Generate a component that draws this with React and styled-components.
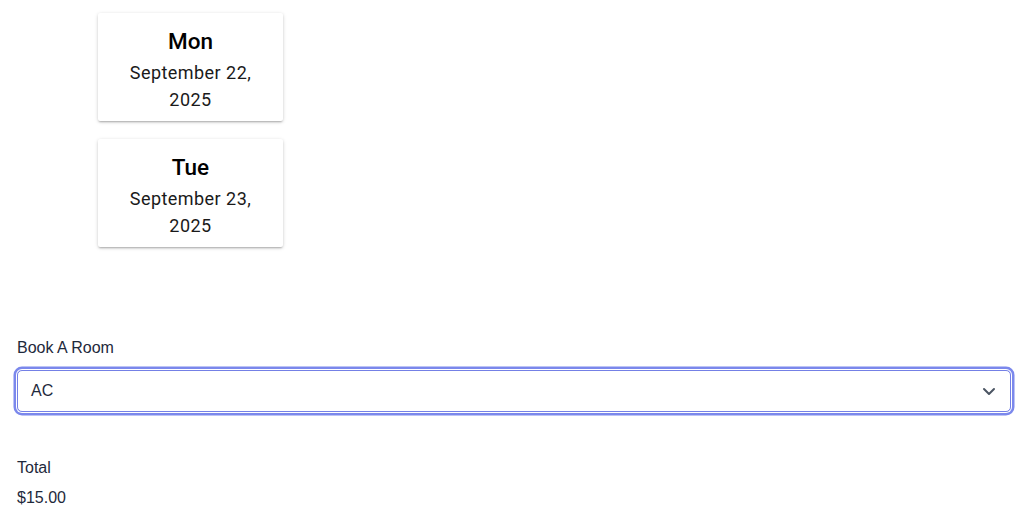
import React from "react";
import styled, { createGlobalStyle } from "styled-components";

const Global = createGlobalStyle`
  html, body { margin: 0; padding: 0; background: #fff; }
  body { font-family: "Liberation Sans", Arial, sans-serif; }
`;

const Page = styled.div`
  padding: 0 13px 20px 17px;
`;

const CardList = styled.div`
  display: flex;
  flex-direction: column;
  gap: 18px;
  padding-top: 13px;
  margin-left: 81px;
`;

const DayCard = styled.div`
  width: 185px;
  height: 108px;
  box-sizing: border-box;
  padding-top: 14px;
  background: #fff;
  box-shadow: 0 2px 2px -1px rgba(0,0,0,0.2), 0 1px 3px 0 rgba(0,0,0,0.14), 0 1px 5px 0 rgba(0,0,0,0.08);
  border-radius: 2px;
  text-align: center;
  font-family: Roboto, "Liberation Sans", sans-serif;
  color: #111;
`;

const DayName = styled.div`
  font-size: 22.5px;
  font-weight: 500;
  line-height: 28px;
  margin-bottom: 4px;
  color: #000;
`;

const DateText = styled.div`
  font-size: 18px;
  line-height: 27px;
  letter-spacing: 0.45px;
  padding: 0 12px;
  color: #1a1a1a;
`;

const Form = styled.div`
  margin-top: 91px;
  display: flex;
  flex-direction: column;
`;

const Label = styled.div`
  font-size: 16px;
  line-height: 20px;
  color: #1e293b;
  margin-bottom: ${p => p.$gap || 0}px;
`;

const SelectBox = styled.div`
  height: 42px;
  box-sizing: border-box;
  border: 1px solid #7480e6;
  border-radius: 5px;
  box-shadow: 0 0 0 1px #fff, 0 0 0 3.5px #7b88ec;
  display: flex;
  align-items: center;
  justify-content: space-between;
  padding: 0 12px 0 13px;
  color: #1e293b;
`;

const Value = styled.div`
  font-size: 16px;
  color: #1e293b;
`;

const Chevron = () => (
  <svg width="18" height="18" viewBox="0 0 18 18" fill="none">
    <path d="M4 7 L9 12 L14 7" stroke="#4b5563" strokeWidth="2" strokeLinecap="round" strokeLinejoin="round" />
  </svg>
);

const TotalBlock = styled.div`
  margin-top: 46px;
  display: flex;
  flex-direction: column;
  gap: 10px;
`;

const days = [
  { name: "Mon", date: "September 22, 2025" },
  { name: "Tue", date: "September 23, 2025" },
];

export default function App() {
  return (
    <>
      <Global />
      <Page>
        <CardList>
          {days.map(d => (
            <DayCard key={d.name}>
              <DayName>{d.name}</DayName>
              <DateText>{d.date}</DateText>
            </DayCard>
          ))}
        </CardList>
        <Form>
          <Label $gap={12}>Book A Room</Label>
          <SelectBox>
            <Value>AC</Value>
            <Chevron />
          </SelectBox>
        </Form>
        <TotalBlock>
          <Label>Total</Label>
          <Label>$15.00</Label>
        </TotalBlock>
      </Page>
    </>
  );
}
